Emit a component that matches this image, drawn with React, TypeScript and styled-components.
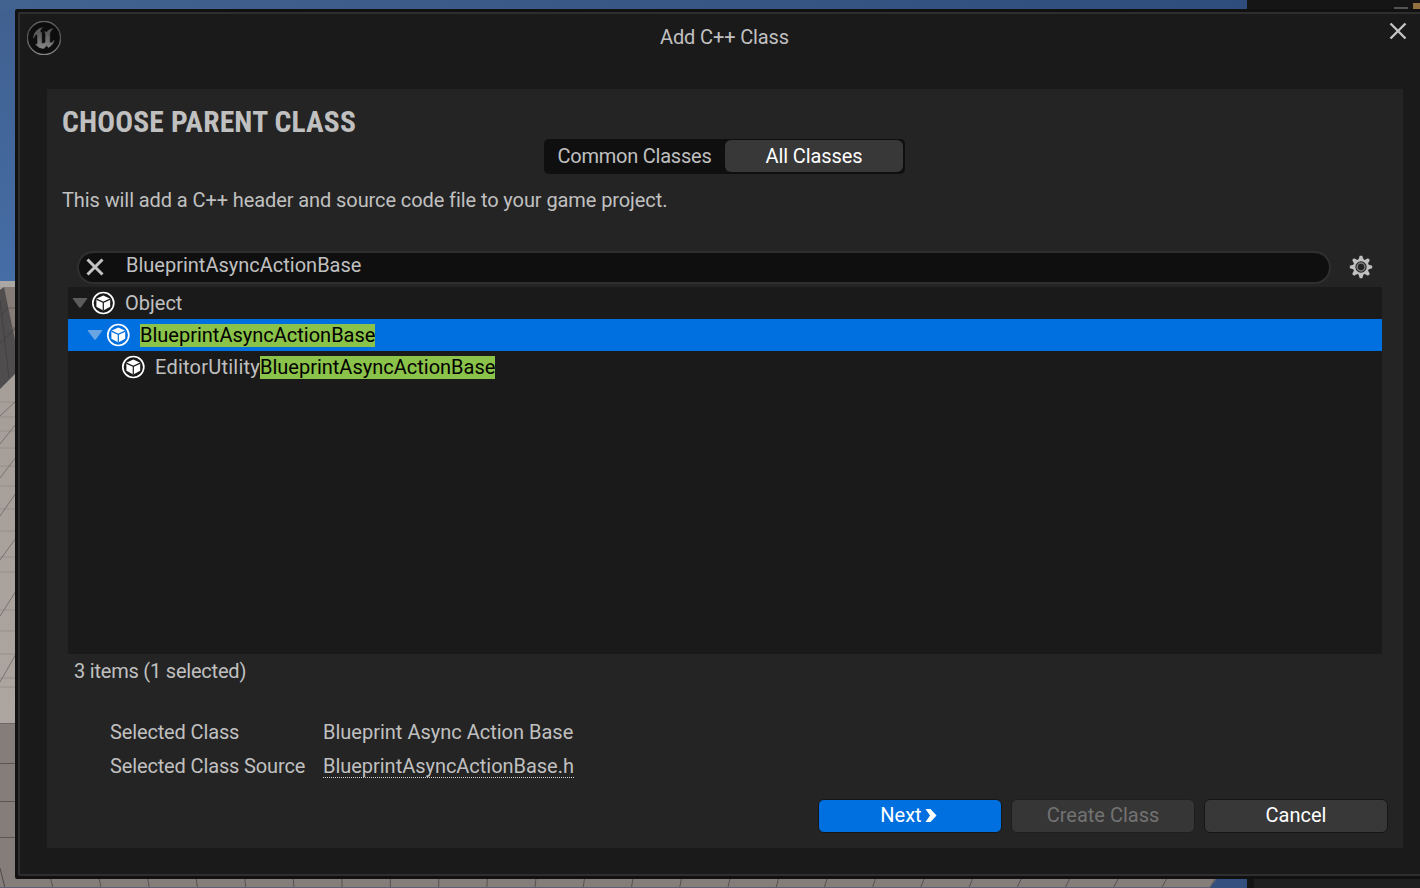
import React from 'react';
import styled, { createGlobalStyle } from 'styled-components';
import { SiUnrealengine } from 'react-icons/si';

const Global = createGlobalStyle`
  * { box-sizing: border-box; }
  body {
    margin: 0;
    background: #151515;
    color: #c0c0c0;
    font-family: Roboto, "Liberation Sans", sans-serif;
    font-size: 20px;
    line-height: 24px;
    font-variant-ligatures: none;
  }
  button { font: inherit; color: inherit; }
`;

const Screen = styled.div`
  position: relative;
  width: 1420px;
  height: 888px;
  padding: 9px 0 9px 15px;
  overflow: hidden;
`;

const Viewport = styled.svg`
  position: absolute;
  inset: 0;
  z-index: -1;
`;

const Frame = styled.div`
  height: 870px;
  padding: 3px 0 3px 3px;
  border-radius: 2px 0 0 2px;
  background: #111;
`;

const Dialog = styled.main`
  display: flex;
  flex-direction: column;
  height: 864px;
  border: 2px solid #2e2e2e;
  border-right: 0;
  border-radius: 2px 0 0 2px;
  background: #1a1a1a;
`;

const TitleBar = styled.header`
  display: grid;
  grid-template-columns: 100px 1fr 100px;
  flex: none;
  height: 75px;
  padding: 7px 12px 0 7px;
`;

const Logo = styled.div`
  width: 34px;
  height: 34px;
  border-radius: 50%;
  background: #0d0d0d;
  svg { display: block; }
  path { fill: url(#steel); stroke: url(#steel); stroke-width: 0.35; }
`;

const Title = styled.h1`
  margin: 4px 0 0 14px;
  font-size: 20px;
  font-weight: 400;
  text-align: center;
  letter-spacing: -0.13px;
`;

const CloseButton = styled.button`
  justify-self: end;
  width: 20px;
  height: 20px;
  margin: 0;
  padding: 0;
  border: 0;
  background: none;
  svg { display: block; }
`;

const Content = styled.section`
  display: flex;
  flex-direction: column;
  width: 1356px;
  height: 759px;
  margin-left: 27px;
  padding: 15px;
  background: #242424;
`;

const Heading = styled.h2`
  margin: 0;
  height: 35px;
  font-family: "Roboto Condensed", Roboto, sans-serif;
  font-size: 29.5px;
  font-weight: 700;
  line-height: 36px;
  letter-spacing: 0.18px;
`;

const Segmented = styled.div`
  display: flex;
  align-self: center;
  width: 361px;
  height: 35px;
  margin-right: 2px;
  padding: 1px 2px 2px 1px;
  border-radius: 5px;
  background: #0f0f0f;
`;

const Segment = styled.button<{ $active?: boolean }>`
  flex: ${(p) => (p.$active ? '0 0 178px' : '1')};
  padding: 0 0 0 ${(p) => (p.$active ? '1px' : '0')};
  border: 0;
  border-radius: 6px;
  background: ${(p) => (p.$active ? '#383838' : 'transparent')};
  color: ${(p) => (p.$active ? '#fff' : '#c0c0c0')};
  letter-spacing: ${(p) => (p.$active ? '-0.1px' : '-0.23px')};
`;

const Description = styled.p`
  margin: 14px 0 0;
  letter-spacing: -0.09px;
`;

const SearchRow = styled.div`
  display: flex;
  align-items: center;
  gap: 18px;
  height: 33px;
  margin: 39px 0 0 15px;
  > svg { margin-bottom: 2px; }
`;

const SearchBox = styled.div`
  display: flex;
  align-items: center;
  width: 1254px;
  height: 33px;
  padding: 0 0 2px 6px;
  border: 2px solid #2f2f2f;
  border-radius: 17px;
  background: #0f0f0f;
`;

const SearchText = styled.span`
  margin: -4px 0 0 21px;
`;

const Tree = styled.div`
  flex: none;
  width: 1314px;
  height: 367px;
  margin: 3px 0 0 6px;
  background: #1a1a1a;
`;

const TreeRow = styled.div<{ $depth: number; $selected?: boolean }>`
  display: flex;
  align-items: center;
  height: 32px;
  padding-left: ${(p) => 4 + p.$depth * 15}px;
  background: ${(p) => (p.$selected ? '#0070e0' : 'transparent')};
`;

const Expander = styled.svg`
  flex: none;
  width: 16px;
  height: 12px;
  margin-right: 3px;
`;

const ClassIcon = styled.svg`
  flex: none;
  width: 24px;
  height: 24px;
  margin-right: 10px;
`;

const Match = styled.mark`
  height: 23px;
  line-height: 23px;
  background: #8bc24a;
  color: #000;
`;

const Prefix = styled.span`
  letter-spacing: 0.23px;
`;

const Count = styled.p`
  margin: 5px 0 0 12px;
  letter-spacing: -0.21px;
`;

const Details = styled.dl`
  display: grid;
  grid-template-columns: 213px auto;
  justify-content: start;
  row-gap: 10px;
  margin: 37px 0 0 48px;
  dt, dd { margin: 0; }
  dt { letter-spacing: -0.14px; }
`;

const SourceLink = styled.a`
  display: inline-block;
  height: 24px;
  border-bottom: 1px dotted #d8d8d8;
  letter-spacing: -0.03px;
`;

const Actions = styled.footer`
  display: flex;
  justify-content: flex-end;
  gap: 9px;
  height: 34px;
  margin-top: 21px;
`;

const ActionButton = styled.button<{ $kind: 'primary' | 'plain' | 'muted' }>`
  display: flex;
  align-items: center;
  justify-content: center;
  gap: 3px;
  width: 184px;
  height: 34px;
  padding: 0 ${(p) => (p.$kind === 'primary' ? '3px' : '0')} 2px 0;
  border: 1px solid ${(p) => (p.$kind === 'muted' ? '#1e1e1e' : '#161616')};
  border-radius: 6px;
  background: ${(p) => (p.$kind === 'primary' ? '#0070e0' : p.$kind === 'muted' ? '#363636' : '#383838')};
  color: ${(p) => (p.$kind === 'muted' ? '#727272' : '#fff')};
`;

const verticals = Array.from({ length: 25 }, (_, i) => 50.5 + i * 48.55);
const floorRows = [402, 417, 431, 448, 466, 486, 509, 531, 557, 572, 610, 631, 654, 678, 687];

function Scene() {
  return (
    <Viewport viewBox="0 0 1420 888" width="1420" height="888">
      <defs>
        <linearGradient id="sky" x1="0" y1="0" x2="0" y2="1">
          <stop offset="0" stopColor="#40608f" />
          <stop offset="1" stopColor="#456da6" />
        </linearGradient>
        <linearGradient id="skyTop" x1="0" y1="0" x2="1" y2="0">
          <stop offset="0" stopColor="#42628f" />
          <stop offset="1" stopColor="#2f4d7c" />
        </linearGradient>
        <linearGradient id="floor" x1="0" y1="0" x2="0" y2="1">
          <stop offset="0" stopColor="#a39c96" />
          <stop offset="1" stopColor="#aca5a0" />
        </linearGradient>
      </defs>
      <rect width="16" height="282" fill="url(#sky)" />
      <rect width="1247" height="10" fill="url(#skyTop)" />
      <rect y="281" width="16" height="442" fill="url(#floor)" />
      <rect y="281" width="16" height="6" fill="#aaa7a4" />
      <path d="M4 287H16V348L4 290Z" fill="#857c77" />
      <path d="M0 290L4 287L16 345V373L0 389Z" fill="#504d4f" />
      <path d="M8 308H16M10 328H16" stroke="#625c5a" />
      <path d="M0 316L8 308M0 343L16 328M0 300L9 378" stroke="#3f3d3f" strokeWidth="0.8" />
      {floorRows.map((y) => (
        <path key={y} d={`M0 ${y}H16`} stroke="#928b86" strokeWidth="0.8" />
      ))}
      <path d="M0 416L16 401M0 444L16 424M0 478L16 457M0 516L16 493M0 560L16 538M0 616L16 591M0 682L16 654" stroke="#78726e" />
      <rect y="723" width="1216" height="165" fill="#857d79" />
      <path d="M0 763.500H16M0 801.500H16M0 837.500H16" stroke="#5a5553" />
      <path d="M0 723.500H16" stroke="#6e6864" />
      <path d="M0 868L5 888" stroke="#4d4947" />
      {verticals.map((x, i) => (
        <path key={x} d={`M${x} 878L${x + (7 - i) * 0.35} 888`} stroke="#575250" />
      ))}
      <path d="M0 887.500H1212" stroke="#5b6073" />
      <path d="M1217 878H1247V888H1210Z" fill="#34507e" />
      <rect x="1247" width="173" height="888" fill="#151515" />
      <rect x="1254" y="878" width="166" height="10" fill="#202020" />
      <path d="M1394 8H1408" stroke="#6a6a6a" strokeWidth="1.500" />
      <path d="M1413 3H1420V9H1413Z" fill="#93703f" />
    </Viewport>
  );
}

function Cross({ size, weight }: { size: number; weight: number }) {
  return (
    <svg width={size} height={size} viewBox="0 0 20 20" fill="none" stroke="#c4c4c4" strokeWidth={weight}>
      <path d="M2.500 2.500L17.500 17.500M17.500 2.500L2.500 17.500" />
    </svg>
  );
}

function Cube({ inner }: { inner: string }) {
  return (
    <ClassIcon viewBox="0 0 24 24">
      <circle cx="12.300" cy="12" r="10.500" fill="none" stroke="#fff" strokeWidth="1.700" />
      <path d="M12.300 4.500L19.200 7.700V15.800L12.300 19.500L5.400 15.800V7.700Z" fill="#fff" />
      <path d="M5.400 8.100L12.300 11.400L19.200 8.100M12.300 11.400V19.600" fill="none" stroke={inner} strokeWidth="1.200" />
    </ClassIcon>
  );
}

function Arrow({ fill }: { fill: string }) {
  return (
    <Expander viewBox="0 0 16 12">
      <path d="M1.200 1H14.800Q15.800 1 15.200 1.800L9 10.200Q8 11.300 7 10.200L0.800 1.800Q0.200 1 1.200 1Z" fill={fill} />
    </Expander>
  );
}

function Gear() {
  return (
    <svg width="24" height="24" viewBox="-12 -12 24 24">
      {[0, 45, 90, 135, 180, 225, 270, 315].map((a) => (
        <path key={a} d="M-2.600 -7L-1.300 -11.200H1.300L2.600 -7Z" fill="#c0c0c0" transform={`rotate(${a})`} />
      ))}
      <circle r="6.800" fill="#242424" stroke="#c0c0c0" strokeWidth="2.300" />
      <circle r="3.900" fill="none" stroke="#7c7c7c" strokeWidth="1.500" />
    </svg>
  );
}

export default function App() {
  return (
    <Screen>
      <Global />
      <Scene />
      <Frame>
        <Dialog>
          <TitleBar>
            <Logo>
              <svg width="0" height="0">
                <linearGradient id="steel" x1="0" y1="0" x2="0" y2="1">
                  <stop offset="0" stopColor="#707070" />
                  <stop offset="0.350" stopColor="#5a5a5a" />
                  <stop offset="1" stopColor="#989898" />
                </linearGradient>
              </svg>
              <SiUnrealengine size={34} />
            </Logo>
            <Title>Add C++ Class</Title>
            <CloseButton aria-label="Close">
              <Cross size={20} weight={2.4} />
            </CloseButton>
          </TitleBar>
          <Content>
            <Heading>CHOOSE PARENT CLASS</Heading>
            <Segmented>
              <Segment>Common Classes</Segment>
              <Segment $active>All Classes</Segment>
            </Segmented>
            <Description>This will add a C++ header and source code file to your game project.</Description>
            <SearchRow>
              <SearchBox>
                <Cross size={20} weight={3} />
                <SearchText>BlueprintAsyncActionBase</SearchText>
              </SearchBox>
              <Gear />
            </SearchRow>
            <Tree>
              <TreeRow $depth={0}>
                <Arrow fill="#5c5c5c" />
                <Cube inner="#1a1a1a" />
                Object
              </TreeRow>
              <TreeRow $depth={1} $selected>
                <Arrow fill="#6aa5e3" />
                <Cube inner="#0070e0" />
                <Match>BlueprintAsyncActionBase</Match>
              </TreeRow>
              <TreeRow $depth={2}>
                <Expander />
                <Cube inner="#1a1a1a" />
                <Prefix>EditorUtility</Prefix>
                <Match>BlueprintAsyncActionBase</Match>
              </TreeRow>
            </Tree>
            <Count>3 items (1 selected)</Count>
            <Details>
              <dt>Selected Class</dt>
              <dd>Blueprint Async Action Base</dd>
              <dt>Selected Class Source</dt>
              <dd>
                <SourceLink>BlueprintAsyncActionBase.h</SourceLink>
              </dd>
            </Details>
            <Actions>
              <ActionButton $kind="primary">
                Next
                <svg width="12" height="15" viewBox="0 0 12 15">
                  <path d="M0.500 1H5.500L11.500 7.500L5.500 14H0.500L5 7.500Z" fill="#fff" />
                </svg>
              </ActionButton>
              <ActionButton $kind="muted">Create Class</ActionButton>
              <ActionButton $kind="plain">Cancel</ActionButton>
            </Actions>
          </Content>
        </Dialog>
      </Frame>
    </Screen>
  );
}
